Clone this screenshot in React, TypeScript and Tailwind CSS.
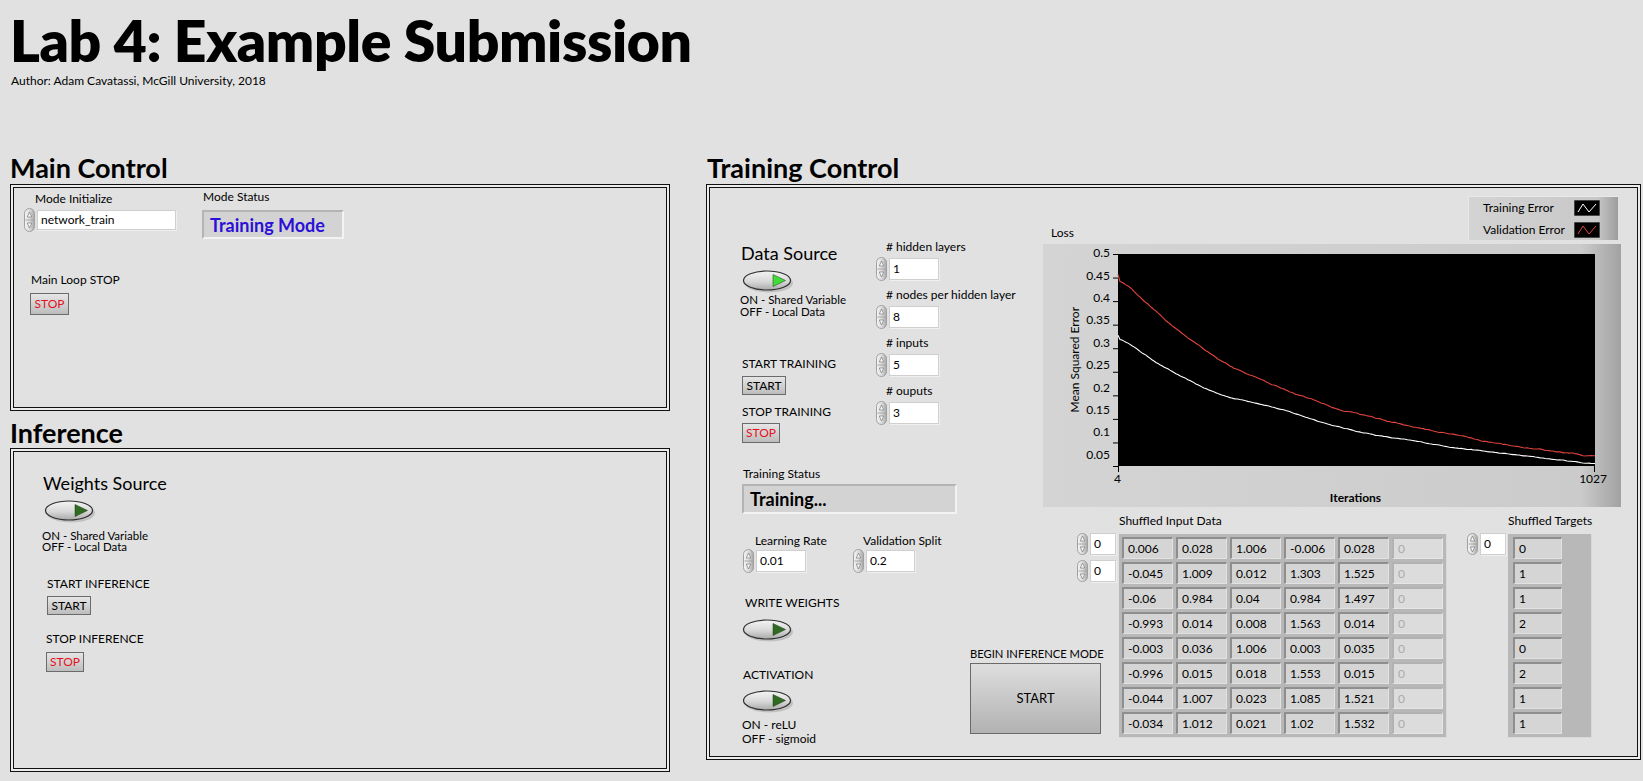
import React from "react";

const lbl = "text-[12px] leading-[14px] whitespace-nowrap";

function Spinner({ h = 24 }: { h?: number }) {
  return (
    <svg width="11" height={h} viewBox={`0 0 11 ${h}`} className="shrink-0">
      <defs>
        <linearGradient id="spg" x1="0" y1="0" x2="1" y2="0">
          <stop offset="0" stopColor="#f6f6f6" />
          <stop offset="0.55" stopColor="#d9d9d9" />
          <stop offset="1" stopColor="#a4a4a4" />
        </linearGradient>
      </defs>
      <rect x="0.5" y="0.5" width="10" height={h - 1} rx="5" fill="url(#spg)" stroke="#a0a0a0" />
      <line x1="1.5" x2="9.5" y1={h / 2} y2={h / 2} stroke="#9a9a9a" strokeWidth="0.8" />
      <path d={`M3.3 ${h / 2 - 3} L5.5 ${h / 2 - 8} L7.7 ${h / 2 - 3} Z`} fill="#fafafa" stroke="#7a7a7a" strokeWidth="0.7" />
      <path d={`M3.3 ${h / 2 + 3} L5.5 ${h / 2 + 8} L7.7 ${h / 2 + 3} Z`} fill="#fafafa" stroke="#7a7a7a" strokeWidth="0.7" />
    </svg>
  );
}

function NumField({ value, w, h = 22, sh = 24 }: { value: string; w: string; h?: number; sh?: number }) {
  return (
    <div className="flex items-center gap-[2px]">
      <Spinner h={sh} />
      <div
        className={`${w} ${h === 22 ? "h-[22px]" : "h-[20px]"} bg-white border border-[#cfcfcf] shadow-[1px_1px_0_#efefef] flex items-center pl-[3px] text-[12px] leading-none`}
      >
        {value}
      </div>
    </div>
  );
}

function Btn({ children, cls, red }: { children: React.ReactNode; cls: string; red?: boolean }) {
  return (
    <div
      className={`flex items-center justify-center border border-[#6b6b6b] bg-linear-to-b from-[#e6e6e6] to-[#bdbdbd] text-[12px] leading-none ${
        red ? "text-[#e3121f]" : "text-black"
      } ${cls}`}
    >
      {children}
    </div>
  );
}

function Toggle({ led }: { led: string }) {
  return (
    <svg width="52" height="24" viewBox="0 0 52 24" className="block">
      <defs>
        <linearGradient id="tgl" x1="0" y1="0" x2="0" y2="1">
          <stop offset="0" stopColor="#f4f4f4" />
          <stop offset="0.55" stopColor="#d8d8d8" />
          <stop offset="1" stopColor="#a9a9a9" />
        </linearGradient>
      </defs>
      <ellipse cx="27" cy="14" rx="24" ry="9.5" fill="#a8a8a8" opacity="0.55" />
      <ellipse cx="25" cy="11.5" rx="23.5" ry="9.5" fill="url(#tgl)" stroke="#2e2e2e" strokeWidth="1.2" />
      <path d="M31 5.5 L43.5 11.5 L31 17.5 Z" fill={led} stroke="#1c3d12" strokeWidth="0.5" strokeLinejoin="round" />
    </svg>
  );
}

function Box({ cls, children }: { cls: string; children?: React.ReactNode }) {
  return (
    <div className={`border border-[#111] p-[2px] bg-[#ececec] ${cls}`}>
      <div className="border border-[#111] bg-[#e1e1e1] h-full">{children}</div>
    </div>
  );
}

const whitePts: [number, number][] = [
  [0, 0.328], [0.03, 0.305], [0.062, 0.282], [0.1, 0.258], [0.144, 0.233], [0.185, 0.213],
  [0.226, 0.197], [0.308, 0.181], [0.39, 0.155], [0.472, 0.13], [0.554, 0.113], [0.636, 0.1],
  [0.718, 0.088], [0.8, 0.077], [0.88, 0.068], [1, 0.054],
];
const redPts: [number, number][] = [
  [0, 0.456], [0.029, 0.424], [0.062, 0.396], [0.103, 0.356], [0.144, 0.325], [0.185, 0.297],
  [0.226, 0.266], [0.267, 0.247], [0.308, 0.228], [0.39, 0.197], [0.472, 0.169], [0.554, 0.148],
  [0.636, 0.13], [0.718, 0.113], [0.8, 0.098], [0.88, 0.085], [1, 0.069],
];

function interp(pts: [number, number][], t: number) {
  for (let i = 0; i < pts.length - 1; i++) {
    const [t0, v0] = pts[i];
    const [t1, v1] = pts[i + 1];
    if (t >= t0 && t <= t1) return v0 + ((v1 - v0) * (t - t0)) / (t1 - t0);
  }
  return pts[pts.length - 1][1];
}

function series(pts: [number, number][], amp: number, seed: number) {
  const n = 240;
  const raw = Array.from({ length: n }, (_, i) => interp(pts, i / (n - 1)));
  const sm = raw.map((_, i) => {
    let s = 0;
    let c = 0;
    for (let k = -5; k <= 5; k++) {
      const j = i + k;
      if (j >= 0 && j < n) {
        s += raw[j];
        c++;
      }
    }
    return s / c;
  });
  sm[0] = raw[0];
  let r = seed;
  const rnd = () => {
    r = (r * 16807) % 2147483647;
    return r / 2147483647;
  };
  let walk = 0;
  return sm
    .map((v, i) => {
      walk = walk * 0.86 + (rnd() - 0.5) * amp;
      const val = v + walk;
      const x = 7 + (i / (n - 1)) * 477;
      const y = ((0.5 - val) / 0.45) * 212;
      return `${x.toFixed(2)},${y.toFixed(2)}`;
    })
    .join(" ");
}

const whiteLine = series(whitePts, 0.0013, 12345);
const redLine = series(redPts, 0.002, 67891);

const yTicks = ["0.5", "0.45", "0.4", "0.35", "0.3", "0.25", "0.2", "0.15", "0.1", "0.05"];

function Swatch({ color }: { color: string }) {
  return (
    <svg width="26" height="16" viewBox="0 0 26 16" className="block">
      <rect x="0" y="0" width="26" height="16" fill="#000" stroke="#8a8a8a" strokeWidth="1" />
      <polyline points="4,12 9,4 15,12 22,4" fill="none" stroke={color} strokeWidth="1" />
    </svg>
  );
}

function Legend() {
  return (
    <div className="ml-auto mr-[3px] w-[150px] h-[44px] bg-[linear-gradient(to_right,#d3d3d3,#c8c8c8_86%,#9d9d9d)] border-t border-l border-[#e9e9e9] flex flex-col justify-center gap-[6px] pl-[14px]">
      <div className="flex items-center h-[16px]">
        <span className="w-[91px] text-[12px] leading-none">Training Error</span>
        <Swatch color="#ffffff" />
      </div>
      <div className="flex items-center h-[16px]">
        <span className="w-[91px] text-[12px] leading-none">Validation Error</span>
        <Swatch color="#e2443c" />
      </div>
    </div>
  );
}

function Graph() {
  return (
    <div className="mt-[4px] h-[263px] w-[578px] bg-[linear-gradient(to_right,#d4d4d4,#cbcbcb_93%,#a2a2a2)] flex flex-col">
      <div className="flex h-[222px] pt-[10px]">
        <div className="w-[44px] pl-[20px] flex items-center justify-center h-[212px]">
          <div className="[writing-mode:vertical-rl] rotate-180 whitespace-nowrap text-[12px] leading-[14px]">
            Mean Squared Error
          </div>
        </div>
        <div className="w-[24px] -mt-[12px] flex flex-col shrink-0">
          {yTicks.map((t) => (
            <div key={t} className="h-[23.56px] flex items-center justify-end text-[12px] leading-none pr-[1px]">
              {t}
            </div>
          ))}
        </div>
        <svg width="484" height="212" viewBox="0 0 484 212" className="shrink-0 overflow-visible">
          <rect x="7" y="0" width="477" height="212" fill="#000" />
          {yTicks.map((t, i) => (
            <line key={t} x1="2" x2="7" y1={i * 23.556 + 0.5} y2={i * 23.556 + 0.5} stroke="#000" strokeWidth="1" />
          ))}
          <line x1="7.5" x2="7.5" y1="212" y2="218" stroke="#000" strokeWidth="1" />
          <line x1="483.5" x2="483.5" y1="212" y2="218" stroke="#000" strokeWidth="1" />
          <polyline points={redLine} fill="none" stroke="#e2443c" strokeWidth="1.1" />
          <polyline points={whiteLine} fill="none" stroke="#ffffff" strokeWidth="1.1" />
        </svg>
      </div>
      <div className="flex justify-between ml-[71px] w-[493px] mt-[6px] text-[12px] leading-[14px]">
        <span>4</span>
        <span>1027</span>
      </div>
      <div className="ml-[74px] w-[477px] text-center mt-[5px] text-[12px] leading-[14px] font-bold">Iterations</div>
    </div>
  );
}

const tableData = [
  ["0.006", "0.028", "1.006", "-0.006", "0.028", "0"],
  ["-0.045", "1.009", "0.012", "1.303", "1.525", "0"],
  ["-0.06", "0.984", "0.04", "0.984", "1.497", "0"],
  ["-0.993", "0.014", "0.008", "1.563", "0.014", "0"],
  ["-0.003", "0.036", "1.006", "0.003", "0.035", "0"],
  ["-0.996", "0.015", "0.018", "1.553", "0.015", "0"],
  ["-0.044", "1.007", "0.023", "1.085", "1.521", "0"],
  ["-0.034", "1.012", "0.021", "1.02", "1.532", "0"],
];
const targets = ["0", "1", "1", "2", "0", "2", "1", "1"];

function Cell({ v, dis, w }: { v: string; dis?: boolean; w: string }) {
  return (
    <div
      className={`${w} h-[22px] flex items-center pl-[4px] text-[12px] leading-none border-t-2 border-l-2 border-r border-b ${
        dis
          ? "bg-[#dcdcdc] text-[#ababab] border-t-[#b2b2b2] border-l-[#b2b2b2] border-r-[#e6e6e6] border-b-[#e6e6e6]"
          : "bg-[#d5d5d5] text-black border-t-[#8e8e8e] border-l-[#8e8e8e] border-r-[#e2e2e2] border-b-[#e2e2e2]"
      }`}
    >
      {v}
    </div>
  );
}

function NumGroup({ label, value, cls }: { label: string; value: string; cls?: string }) {
  return (
    <div className={`flex flex-col ${cls ?? ""}`}>
      <div className={`${lbl} ml-[10px]`}>{label}</div>
      <div className="mt-[3px]">
        <NumField value={value} w="w-[50px]" />
      </div>
    </div>
  );
}

function Indicator({ children, cls }: { children: React.ReactNode; cls: string }) {
  return (
    <div
      className={`bg-[#d3d3d3] border-2 border-t-[#b4b4b4] border-l-[#b4b4b4] border-r-[#f3f3f3] border-b-[#f3f3f3] flex items-center pl-[6px] font-bold leading-none ${cls}`}
    >
      {children}
    </div>
  );
}

export default function App() {
  return (
    <div className="w-[1643px] h-[781px] overflow-hidden bg-[#e1e1e1] text-black font-['Lato',sans-serif] pl-[10px] pt-[12px]">
      <h1 className="text-[57px] leading-[57px] font-extrabold whitespace-nowrap tracking-[-0.4px]">Lab 4: Example Submission</h1>
      <div className="text-[12px] leading-[14px] mt-[5px] ml-[1px]">Author: Adam Cavatassi, McGill University, 2018</div>
      <div className="flex gap-[36px] mt-[66px]">
        {/* Left column */}
        <div className="w-[660px] flex flex-col">
          <h2 className="text-[27px] leading-[27px] font-bold">Main Control</h2>
          <Box cls="mt-[3px] h-[227px]">
            <div className="flex items-start pl-[10px] pt-[2px] gap-[26px]">
              <div className="mt-[2px]">
                <div className={`${lbl} ml-[11px]`}>Mode Initialize</div>
                <div className="mt-[2px]">
                  <NumField value="network_train" w="w-[139px]" h={20} />
                </div>
              </div>
              <div>
                <div className={`${lbl} ml-[1px]`}>Mode Status</div>
                <Indicator cls="mt-[6px] w-[142px] h-[29px] text-[18px] text-[#2b10d8]">Training Mode</Indicator>
              </div>
            </div>
            <div className={`${lbl} ml-[17px] mt-[34px]`}>Main Loop STOP</div>
            <Btn cls="ml-[16px] mt-[6px] w-[39px] h-[22px]" red>
              STOP
            </Btn>
          </Box>
          <h2 className="text-[27px] leading-[27px] font-bold mt-[8px]">Inference</h2>
          <Box cls="mt-[2px] h-[324px]">
            <div className="pt-[21px] flex flex-col items-start">
              <div className="text-[18px] leading-[20px] ml-[29px]">Weights Source</div>
              <div className="ml-[30px] mt-[6px]">
                <Toggle led="#2f6b22" />
              </div>
              <div className="ml-[28px] mt-[7px] text-[11.5px] leading-[11px]">
                ON - Shared Variable
                <br />
                OFF - Local Data
              </div>
              <div className={`${lbl} ml-[33px] mt-[25px]`}>START INFERENCE</div>
              <Btn cls="ml-[33px] mt-[5px] w-[44px] h-[19px]">START</Btn>
              <div className={`${lbl} ml-[32px] mt-[17px]`}>STOP INFERENCE</div>
              <Btn cls="ml-[32px] mt-[6px] w-[38px] h-[20px]" red>
                STOP
              </Btn>
            </div>
          </Box>
        </div>

        {/* Right column */}
        <div className="w-[935px] flex flex-col">
          <h2 className="text-[27px] leading-[27px] font-bold ml-[1px]">Training Control</h2>
          <Box cls="mt-[3px] h-[576px]">
            <div className="pl-[31px] pt-[8px] flex flex-col">
              {/* Row 1 */}
              <div className="flex">
                <div className="w-[302px] flex flex-col">
                  <div className="flex items-start pt-[44px]">
                    <div className="w-[135px] mt-[3px] flex flex-col items-start">
                      <div className="text-[18px] leading-[20px]">Data Source</div>
                      <div className="ml-[1px] mt-[6px]">
                        <Toggle led="#3fdc3a" />
                      </div>
                      <div className="-ml-[1px] mt-[1px] text-[11.5px] leading-[12px] whitespace-nowrap">
                        ON - Shared Variable
                        <br />
                        OFF - Local Data
                      </div>
                      <div className={`${lbl} mt-[39px] ml-[1px]`}>START TRAINING</div>
                      <Btn cls="ml-[1px] mt-[5px] w-[44px] h-[19px]">START</Btn>
                      <div className={`${lbl} mt-[10px] ml-[1px]`}>STOP TRAINING</div>
                      <Btn cls="ml-[1px] mt-[4px] w-[38px] h-[20px]" red>
                        STOP
                      </Btn>
                    </div>
                    <div className="flex flex-col">
                      <NumGroup label="# hidden layers" value="1" />
                      <NumGroup label="# nodes per hidden layer" value="8" cls="mt-[7px]" />
                      <NumGroup label="# inputs" value="5" cls="mt-[7px]" />
                      <NumGroup label="# ouputs" value="3" cls="mt-[7px]" />
                    </div>
                  </div>
                  <div className={`${lbl} ml-[2px] mt-[24px]`}>Training Status</div>
                  <Indicator cls="ml-[1px] mt-[3px] w-[215px] h-[30px] text-[18px] text-black">Training...</Indicator>
                </div>
                <div className="w-[578px] flex flex-col">
                  <div className="flex items-end h-[44px]">
                    <div className={`${lbl} ml-[8px]`}>Loss</div>
                    <Legend />
                  </div>
                  <Graph />
                </div>
              </div>

              {/* Row 2 */}
              <div className="flex">
                <div className="w-[229px] flex flex-col items-start pt-[20px]">
                  <div className="flex">
                    <div className="w-[110px] ml-[2px]">
                      <div className={`${lbl} ml-[12px]`}>Learning Rate</div>
                      <div className="mt-[1px]">
                        <NumField value="0.01" w="w-[50px]" />
                      </div>
                    </div>
                    <div>
                      <div className={`${lbl} ml-[10px]`}>Validation Split</div>
                      <div className="mt-[1px]">
                        <NumField value="0.2" w="w-[49px]" />
                      </div>
                    </div>
                  </div>
                  <div className={`${lbl} ml-[4px] mt-[23px]`}>WRITE WEIGHTS</div>
                  <div className="ml-[1px] mt-[8px]">
                    <Toggle led="#2f6b22" />
                  </div>
                  <div className={`${lbl} ml-[2px] mt-[26px]`}>ACTIVATION</div>
                  <div className="ml-[1px] mt-[7px]">
                    <Toggle led="#2f6b22" />
                  </div>
                  <div className="ml-[1px] mt-[5px] text-[12px] leading-[14px] whitespace-nowrap">
                    ON - reLU
                    <br />
                    OFF - sigmoid
                  </div>
                </div>

                <div className="w-[147px] flex flex-col pt-[19px]">
                  <div className="flex flex-col gap-[5px] ml-[107px]">
                    <NumField value="0" w="w-[26px]" sh={22} />
                    <NumField value="0" w="w-[26px]" sh={22} />
                  </div>
                  <div className="text-[11.2px] leading-[14px] whitespace-nowrap mt-[65px]">BEGIN INFERENCE MODE</div>
                  <div className="mt-[2px] w-[131px] h-[71px] border border-[#6a6a6a] bg-linear-to-b from-[#dedede] to-[#b2b2b2] flex items-center justify-center text-[13px] leading-none">
                    START
                  </div>
                </div>

                <div className="ml-[2px] flex flex-col">
                  <div className={lbl}>Shuffled Input Data</div>
                  <div className="mt-[6px] grid grid-cols-[repeat(6,51px)] gap-[3px] p-[3px] bg-[#b8b8b8] border-r border-b border-[#d9d9d9]">
                    {tableData.map((row, ri) =>
                      row.map((v, ci) => <Cell key={`${ri}-${ci}`} v={v} dis={ci === 5} w="w-[51px]" />)
                    )}
                  </div>
                </div>

                <div className="ml-[20px] flex">
                  <div className="pt-[19px]">
                    <NumField value="0" w="w-[26px]" sh={22} />
                  </div>
                  <div className="ml-[2px] flex flex-col">
                    <div className={lbl}>Shuffled Targets</div>
                    <div className="mt-[6px] flex flex-col gap-[3px] px-[5px] py-[3px] bg-[#b8b8b8] border-r border-b border-[#d9d9d9]">
                      {targets.map((v, i) => (
                        <Cell key={i} v={v} w="w-[49px]" />
                      ))}
                    </div>
                  </div>
                </div>
              </div>
            </div>
          </Box>
        </div>
      </div>
    </div>
  );
}
